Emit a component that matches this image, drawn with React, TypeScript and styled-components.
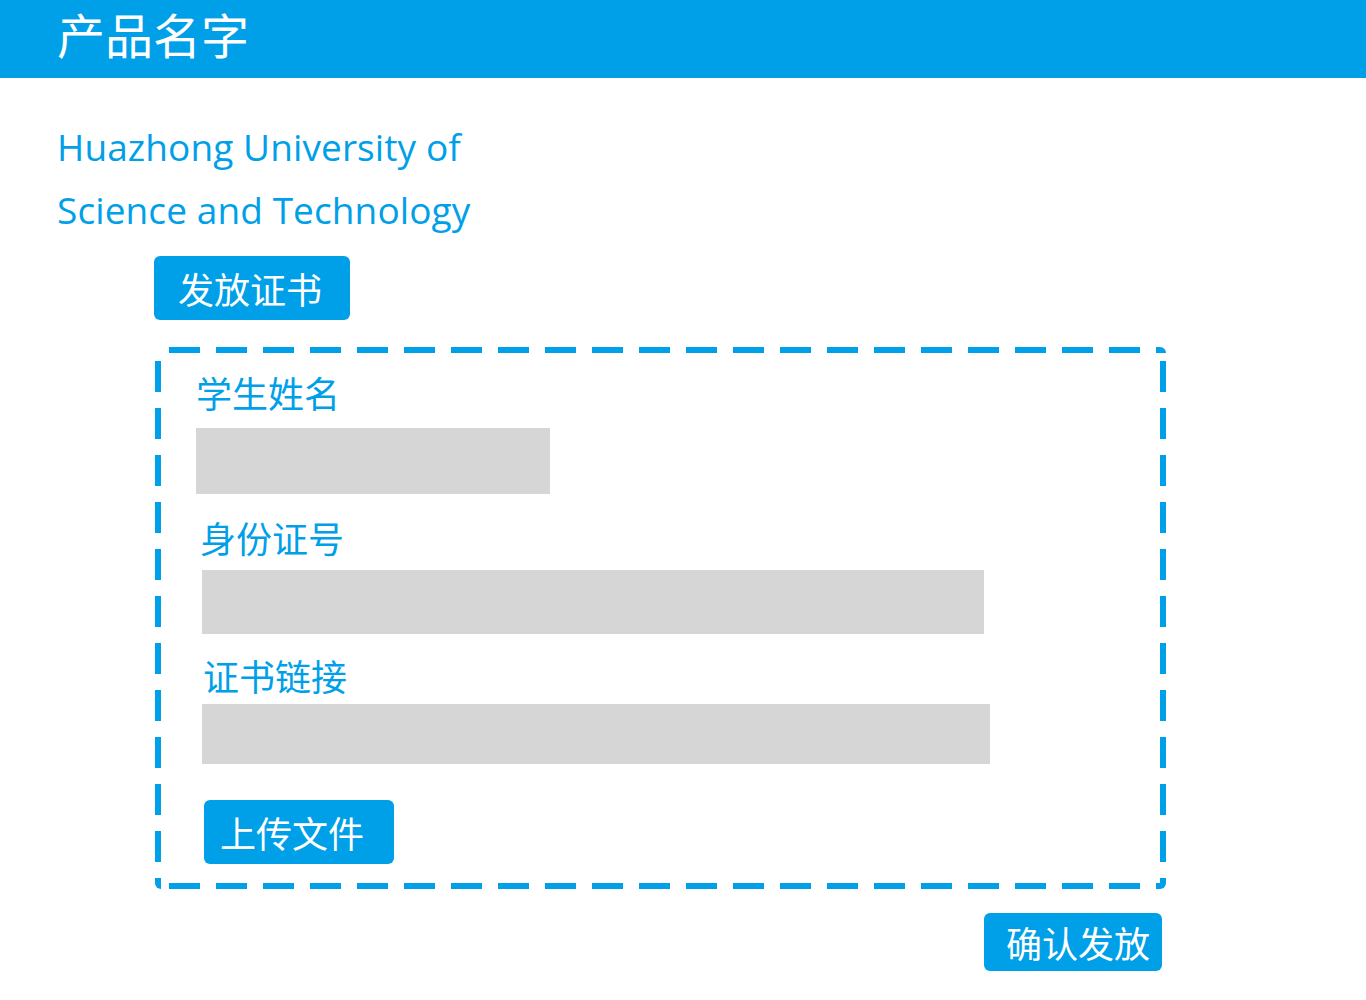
import styled, { createGlobalStyle } from 'styled-components';

const BLUE = '#00a0e9';

const Global = createGlobalStyle`
  body {
    margin: 0;
    background: #fff;
    font-family: "Noto Sans CJK SC", "Open Sans", sans-serif;
  }
`;

const Header = styled.header`
  height: 78px;
  background: ${BLUE};
  color: #fff;
  padding-left: 57px;
  box-sizing: border-box;
`;

const ProductName = styled.h1`
  margin: 0;
  font-size: 48px;
  font-weight: 400;
  line-height: 66px;
`;

const Main = styled.main`
  padding-left: 57px;
`;

const School = styled.div`
  margin-top: 37px;
  font-family: "Open Sans", "Noto Sans CJK SC", sans-serif;
  font-size: 37px;
  letter-spacing: 0.1px;
  line-height: 63px;
  color: ${BLUE};
`;

const BlueButton = styled.button<{ $w: number; $h: number; $pl: number }>`
  display: flex;
  align-items: center;
  box-sizing: border-box;
  width: ${(p) => p.$w}px;
  height: ${(p) => p.$h}px;
  padding: 0 0 0 ${(p) => p.$pl}px;
  border: none;
  border-radius: 6px;
  background: ${BLUE};
  color: #fff;
  font-family: "Noto Sans CJK SC", sans-serif;
  font-size: 36px;
  line-height: 1;
`;

const IssueButton = styled(BlueButton)`
  margin: 15px 0 0 97px;
`;

const dash = (deg: number) =>
  `repeating-linear-gradient(${deg}deg, transparent 0 14px, ${BLUE} 14px 45px, transparent 45px 47px)`;

const DashedPanel = styled.section`
  position: relative;
  box-sizing: border-box;
  width: 1011px;
  height: 542px;
  margin: 27px 0 0 98px;
  padding: 25px 0 0 0;
  border-radius: 6px;
  background:
    ${dash(90)} left top / 100% 6px no-repeat,
    ${dash(90)} left bottom / 100% 6px no-repeat,
    ${dash(180)} left top / 6px 100% no-repeat,
    ${dash(180)} right top / 6px 100% no-repeat;
`;

const Field = styled.div<{ $indent: number; $top: number }>`
  display: flex;
  flex-direction: column;
  align-items: flex-start;
  margin: ${(p) => p.$top}px 0 0 ${(p) => p.$indent}px;
`;

const Label = styled.label<{ $gap: number }>`
  font-size: 36px;
  line-height: 40px;
  color: ${BLUE};
  margin-bottom: ${(p) => p.$gap}px;
`;

const Input = styled.div<{ $w: number; $h: number; $dx?: number }>`
  width: ${(p) => p.$w}px;
  height: ${(p) => p.$h}px;
  margin-left: ${(p) => p.$dx ?? 0}px;
  background: #d6d6d6;
`;

const UploadButton = styled(BlueButton)`
  margin: 36px 0 0 49px;
`;

const Footer = styled.div`
  width: 1011px;
  margin-left: 98px;
  margin-top: 24px;
  display: flex;
  justify-content: flex-end;
  padding-right: 4px;
  box-sizing: border-box;
`;

export default function App() {
  return (
    <>
      <Global />
      <Header>
        <ProductName>产品名字</ProductName>
      </Header>
      <Main>
        <School>
          Huazhong University of
          <br />
          Science and Technology
        </School>
        <IssueButton $w={196} $h={64} $pl={24}>发放证书</IssueButton>
        <DashedPanel>
          <Field $indent={41} $top={0}>
            <Label $gap={16}>学生姓名</Label>
            <Input $w={354} $h={66} />
          </Field>
          <Field $indent={45} $top={23}>
            <Label $gap={13}>身份证号</Label>
            <Input $w={782} $h={64} $dx={2} />
          </Field>
          <Field $indent={48} $top={21}>
            <Label $gap={9}>证书链接</Label>
            <Input $w={788} $h={60} $dx={-1} />
          </Field>
          <UploadButton $w={190} $h={64} $pl={16}>上传文件</UploadButton>
        </DashedPanel>
        <Footer>
          <BlueButton $w={178} $h={58} $pl={22}>确认发放</BlueButton>
        </Footer>
      </Main>
    </>
  );
}
